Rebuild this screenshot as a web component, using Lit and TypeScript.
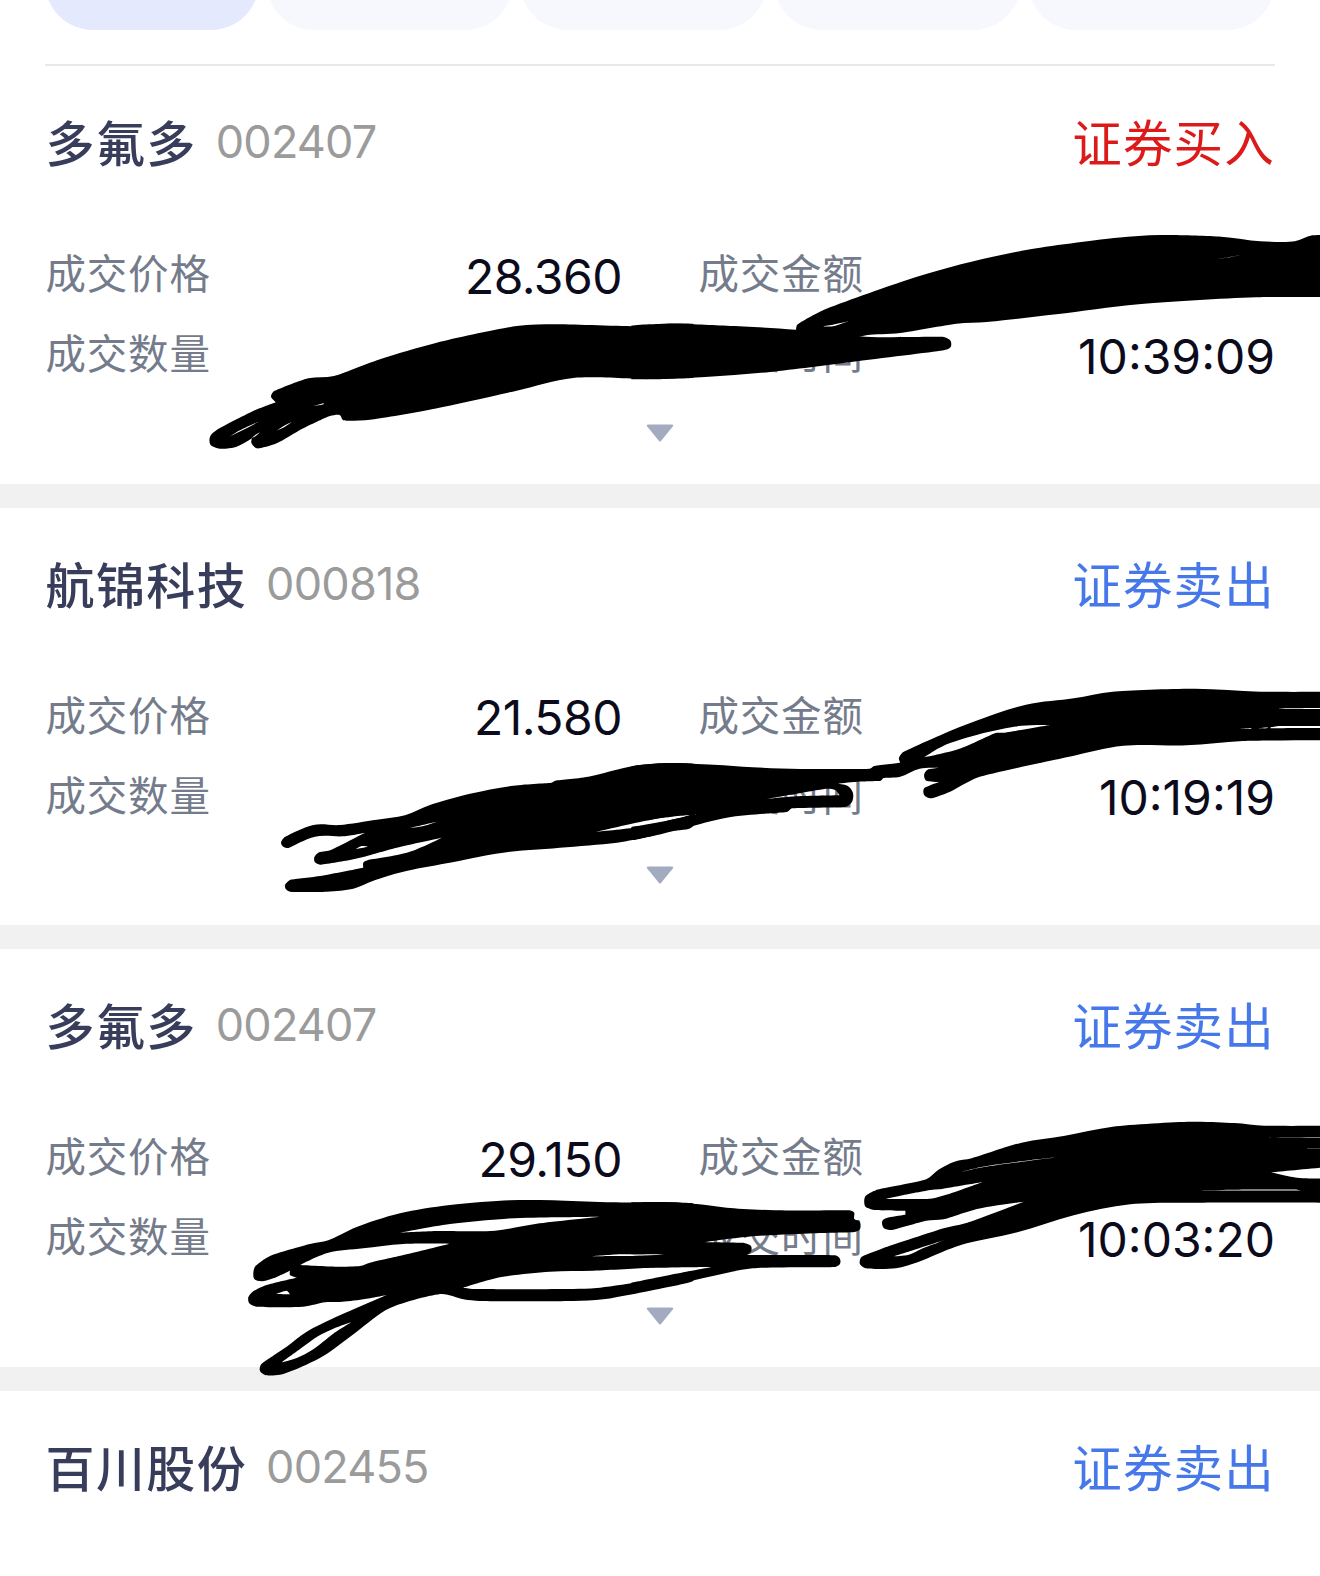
import { LitElement, html, svg, css } from "lit";
import { customElement, property } from "lit/decorators.js";

type Point = [number, number];

interface Trade {
  name: string;
  code: string;
  side: "buy" | "sell";
  price?: string;
  time?: string;
}

/** A blot of marker ink: outer outline first, then the gaps left inside it. */
interface Blot {
  x: number;
  y: number;
  sx: number;
  loops: Point[][];
}

const TRADES: Trade[] = [
  { name: "多氟多", code: "002407", side: "buy", price: "28.360", time: "10:39:09" },
  { name: "航锦科技", code: "000818", side: "sell", price: "21.580", time: "10:19:19" },
  { name: "多氟多", code: "002407", side: "sell", price: "29.150", time: "10:03:20" },
  { name: "百川股份", code: "002455", side: "sell" },
];

const NARROW = 1 / 3;
const WIDE = 680 / 1568;

const BLOTS: Blot[] = [
  {
    x: 190, y: 220, sx: NARROW,
    loops: [
      [[243,530],[250,515],[355,475],[432,468],[570,418],[740,368],[980,318],[1100,313],[1355,319],[1430,311],[1510,311],[1510,474],[1380,478],[1150,474],[980,512],[715,570],[540,599],[460,601],[449,585],[420,588],[340,625],[260,670],[200,685],[184,668],[186,655],[140,680],[90,686],[62,675],[60,650],[80,630],[190,573],[258,547]],
      [[118,650],[150,631],[210,603],[165,627]],
      [[262,631],[280,619],[306,605],[285,620]],
      [[372,558],[402,549],[400,553]],
      [[184,655],[196,645],[212,635],[196,649]],
    ],
  },
  {
    x: 640, y: 220, sx: WIDE,
    loops: [[[-20,317],[20,313],[80,311],[200,317],[360,329],[520,350],[700,351],[716,362],[716,382],[700,391],[500,424],[300,456],[150,471],[0,478],[-20,478]]],
  },
  {
    x: 640, y: 220, sx: WIDE,
    loops: [
      [[360,334],[362,315],[420,272],[600,187],[740,133],[900,88],[1100,53],[1200,45],[1340,50],[1430,64],[1510,64],[1550,46],[1640,46],[1640,232],[1420,232],[1150,253],[960,283],[800,306],[730,311],[600,339],[525,345],[490,354],[420,354]],
      [[420,319],[445,314],[480,304],[445,319]],
      [[1333,117],[1385,106],[1360,112]],
    ],
  },
  {
    x: 190, y: 670, sx: NARROW,
    loops: [
      [[273,518],[282,503],[370,465],[450,465],[560,449],[645,436],[720,405],[840,371],[970,347],[1085,338],[1095,332],[1195,320],[1330,288],[1440,279],[1510,281],[1510,468],[1440,484],[1300,515],[1130,532],[940,548],[770,580],[640,605],[550,632],[490,656],[410,665],[300,665],[288,658],[285,645],[300,630],[390,618],[520,593],[520,578],[535,570],[655,547],[755,503],[620,533],[520,561],[480,570],[390,584],[375,577],[373,562],[385,548],[420,541],[525,488],[460,499],[375,500],[295,534],[280,530]],
      [[655,475],[740,455],[700,468]],
      [[498,537],[515,528],[535,530]],
      [[1220,485],[1350,456],[1450,438],[1500,436],[1350,470]],
    ],
  },
  {
    x: 640, y: 670, sx: WIDE,
    loops: [
      [[-20,289],[0,285],[60,279],[170,284],[260,292],[370,297],[530,296],[540,288],[600,278],[597,265],[605,248],[690,197],[780,150],[890,104],[1000,85],[1090,65],[1280,56],[1430,65],[1640,65],[1640,211],[1390,213],[1260,226],[1115,227],[990,260],[780,322],[715,365],[670,385],[655,375],[655,355],[690,336],[660,332],[655,315],[663,299],[688,294],[645,296],[600,320],[562,324],[555,332],[500,335],[455,341],[478,347],[491,368],[489,395],[475,410],[350,415],[340,425],[300,430],[200,443],[110,472],[50,492],[-10,509],[-20,510],[-20,471],[60,453],[130,433],[100,436],[0,453],[-20,459]],
      [[292,387],[430,356],[450,360],[460,376],[360,379]],
      [[655,262],[700,227],[790,190],[880,167],[945,165],[840,188],[820,189],[735,237]],
      [[1470,115],[1640,113],[1640,117],[1490,117]],
      [[1383,176],[1410,174],[1409,176]],
      [[1425,175],[1448,172],[1445,175]],
      [[1454,172],[1475,168],[1640,168],[1640,174],[1454,175]],
    ],
  },
  {
    x: 190, y: 1110, sx: NARROW,
    loops: [
      [[190,490],[195,470],[240,438],[360,402],[415,391],[500,351],[630,310],[780,285],[960,271],[1090,271],[1250,277],[1450,277],[1510,280],[1510,471],[1390,473],[1210,482],[1080,485],[930,502],[820,533],[850,537],[1150,537],[1220,534],[1350,515],[1510,482],[1510,512],[1410,536],[1240,568],[1150,573],[870,573],[820,568],[755,552],[600,594],[500,665],[400,738],[310,781],[270,794],[225,795],[210,783],[212,765],[230,750],[290,710],[350,665],[430,625],[590,555],[520,568],[450,576],[405,577],[340,590],[200,590],[178,580],[175,562],[188,545],[230,525],[320,503],[300,495],[300,482],[250,505],[215,514],[193,507]],
      [[330,465],[415,428],[520,415],[640,402],[780,401],[650,433],[540,458],[510,468],[440,470]],
      [[630,368],[780,342],[950,326],[1100,322],[1230,320],[1040,341],[915,362],[740,363]],
      [[258,552],[290,542],[300,553]],
      [[1205,439],[1290,433],[1430,433],[1370,437],[1270,438]],
      [[275,757],[330,717],[385,678],[430,656],[485,636],[430,671],[370,718],[320,744]],
    ],
  },
  {
    x: 640, y: 1110, sx: WIDE,
    loops: [[[-20,277],[50,276],[130,282],[200,293],[310,301],[482,301],[494,308],[494,326],[507,335],[507,358],[495,366],[400,370],[250,380],[145,397],[240,399],[256,408],[256,425],[240,438],[60,438],[50,432],[-20,433]]],
  },
  {
    x: 640, y: 1110, sx: WIDE,
    loops: [[[-20,438],[50,436],[450,436],[461,446],[461,462],[450,471],[260,475],[160,500],[50,533],[-20,550],[-20,518],[60,497],[165,471],[-20,473]]],
  },
  {
    x: 640, y: 1110, sx: WIDE,
    loops: [
      [[517,275],[520,258],[545,240],[660,208],[690,178],[725,155],[765,145],[880,98],[980,77],[1090,50],[1270,35],[1370,39],[1440,47],[1640,47],[1640,164],[1455,187],[1520,204],[1640,204],[1640,278],[1300,278],[1130,283],[1000,316],[870,367],[740,405],[640,457],[590,475],[520,475],[507,462],[510,442],[560,415],[700,355],[750,340],[885,275],[780,296],[700,328],[660,332],[580,360],[562,354],[559,332],[575,322],[612,314],[612,302],[540,300],[520,290]],
      [[565,267],[600,257],[670,240],[690,238],[790,216],[710,253],[670,266]],
      [[722,192],[790,170],[890,152],[960,142],[890,154],[790,172]],
      [[585,439],[640,416],[710,387],[650,416],[620,434]],
      [[1255,241],[1380,239],[1515,239],[1525,242]],
      [[1415,82],[1640,81],[1640,83]],
      [[1538,116],[1640,115],[1640,116]],
    ],
  },
];

const EASE = 0.17;

/** Handle of point b between its neighbours; sharp corners get none. */
function handle(a: Point, b: Point, c: Point): Point {
  const inX = b[0] - a[0];
  const inY = b[1] - a[1];
  const outX = c[0] - b[0];
  const outY = c[1] - b[1];
  const lenIn = Math.hypot(inX, inY) || 1;
  const lenOut = Math.hypot(outX, outY) || 1;
  const cos = (inX * outX + inY * outY) / (lenIn * lenOut);
  if (cos < 0.22) return [0, 0];
  const k = Math.min(lenIn, lenOut) * EASE;
  return [(inX / lenIn + outX / lenOut) * k, (inY / lenIn + outY / lenOut) * k];
}

/** Closed curve through every point of the loop. */
function loopPath(points: Point[]): string {
  const n = points.length;
  const at = (i: number) => points[(i + n) % n];
  const f = (v: number) => v.toFixed(1);
  let d = `M${f(points[0][0])} ${f(points[0][1])}`;
  for (let i = 0; i < n; i++) {
    const b = at(i);
    const c = at(i + 1);
    const hb = handle(at(i - 1), b, c);
    const hc = handle(b, c, at(i + 2));
    d += `C${f(b[0] + hb[0])} ${f(b[1] + hb[1])} ${f(c[0] - hc[0])} ${f(c[1] - hc[1])} ${f(c[0])} ${f(c[1])}`;
  }
  return d + "Z";
}

function blotPath(blot: Blot): string {
  return blot.loops
    .map((loop) =>
      loopPath(loop.map(([x, y]): Point => [blot.x + x * blot.sx, blot.y + y / 3])),
    )
    .join("");
}

@customElement("trade-card")
export class TradeCard extends LitElement {
  @property({ attribute: false }) trade!: Trade;

  static styles = css`
    :host {
      display: block;
      box-sizing: border-box;
      height: 417.6px;
      padding: 35px 45px 0;
      background: #fff;
    }
    .head {
      display: flex;
      align-items: center;
      height: 80px;
      white-space: nowrap;
    }
    .name {
      padding: 0 0 1px 0.5px;
      font-size: 49px;
      letter-spacing: 1.4px;
      font-weight: 500;
      color: #373d5a;
    }
    .code {
      margin-left: 19px;
      padding-top: 1px;
      font-size: 45px;
      letter-spacing: -0.8px;
      color: #9b9b9b;
    }
    .side {
      margin-left: auto;
      padding-bottom: 1px;
      font-size: 49.5px;
      letter-spacing: 1.2px;
    }
    .buy {
      color: #dd1a1a;
    }
    .sell {
      color: #4678ea;
    }
    .details {
      display: grid;
      grid-template-columns: 1fr 1fr;
      column-gap: 76px;
      grid-auto-rows: 80px;
      margin-top: 53px;
    }
    .cell {
      display: flex;
      align-items: center;
      justify-content: space-between;
      white-space: nowrap;
    }
    .label {
      padding: 0 0 5px 0.5px;
      font-size: 40.5px;
      letter-spacing: 0.8px;
      color: #747b8b;
    }
    .price,
    .time {
      padding-top: 4px;
      font-size: 48px;
      color: #0b0b1c;
    }
    .price {
      letter-spacing: -0.5px;
    }
    .time {
      letter-spacing: 0;
    }
    .arrow {
      display: block;
      width: 28px;
      height: 18px;
      margin: 30px auto 0;
      fill: #a2abbf;
    }
  `;

  render() {
    const t = this.trade;
    return html`
      <div class="head">
        <span class="name">${t.name}</span>
        <span class="code">${t.code}</span>
        <span class="side ${t.side}">${t.side === "buy" ? "证券买入" : "证券卖出"}</span>
      </div>
      ${t.price
        ? html`
            <div class="details">
              <div class="cell"><span class="label">成交价格</span><span class="price">${t.price}</span></div>
              <div class="cell"><span class="label">成交金额</span></div>
              <div class="cell"><span class="label">成交数量</span></div>
              <div class="cell"><span class="label">成交时间</span><span class="time">${t.time}</span></div>
            </div>
            <svg class="arrow" viewBox="0 0 28 18">
              <path d="M2 .5H26Q28 .8 26.8 2.6L15 17Q14 18 13 17L1.2 2.6Q0 .8 2 .5Z" />
            </svg>
          `
        : null}
    `;
  }
}

@customElement("app-root")
export class AppRoot extends LitElement {
  static styles = css`
    :host {
      display: block;
      position: relative;
      height: 1576px;
      overflow: hidden;
      background: #fff;
      font-family: Inter, "Noto Sans CJK SC", sans-serif;
    }
    .tabs {
      display: grid;
      grid-template-columns: 214px repeat(4, 247.5px);
      column-gap: 6.5px;
      align-items: end;
      box-sizing: border-box;
      height: 66px;
      margin: 0 45px;
      padding-bottom: 34px;
      border-bottom: 2px solid #e8e8e8;
    }
    .tab {
      height: 96px;
      margin-top: -66px;
      border-radius: 48px;
      background: #f6f8fd;
    }
    .active {
      background: #e5e9fe;
    }
    .list {
      display: flex;
      flex-direction: column;
      gap: 24px;
      background: #f1f1f1;
    }
    .ink {
      position: absolute;
      inset: 0;
      width: 1320px;
      height: 1576px;
      pointer-events: none;
    }
  `;

  render() {
    return html`
      <div class="tabs">
        <div class="tab active"></div>
        <div class="tab"></div>
        <div class="tab"></div>
        <div class="tab"></div>
        <div class="tab"></div>
      </div>
      <div class="list">
        ${TRADES.map((t) => html`<trade-card .trade=${t}></trade-card>`)}
      </div>
      <svg class="ink" viewBox="0 0 1320 1576">
        ${BLOTS.map((b) => svg`<path fill-rule="evenodd" d=${blotPath(b)} />`)}
      </svg>
    `;
  }
}
